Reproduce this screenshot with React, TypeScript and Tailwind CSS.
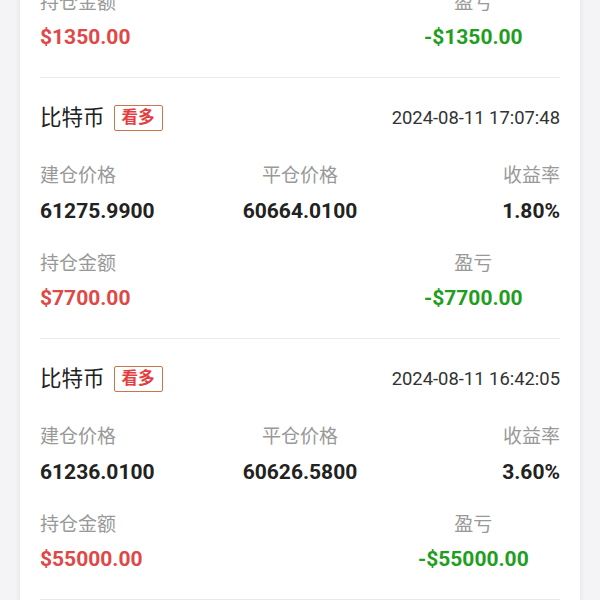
import React from "react";

type Rec = {
  time: string;
  open: string;
  close: string;
  rate: string;
  amount: string;
  pnl: string;
};

const records: Rec[] = [
  { time: "2024-08-11 17:30:12", open: "61300.0000", close: "60700.0000", rate: "1.80%", amount: "$1350.00", pnl: "-$1350.00" },
  { time: "2024-08-11 17:07:48", open: "61275.9900", close: "60664.0100", rate: "1.80%", amount: "$7700.00", pnl: "-$7700.00" },
  { time: "2024-08-11 16:42:05", open: "61236.0100", close: "60626.5800", rate: "3.60%", amount: "$55000.00", pnl: "-$55000.00" },
];

const font = { fontFamily: "Roboto, 'Noto Sans CJK SC', sans-serif" };

function Item({ r }: { r: Rec }) {
  return (
    <div className="border-t border-[#e9e9e9] h-[261px] flex flex-col">
      <div className="h-[80px] flex items-center justify-between">
        <div className="flex items-center gap-[9px]">
          <span className="text-[21.5px] text-[#222] leading-none">比特币</span>
          <span className="text-[16.5px] font-bold text-[#e33d3d] leading-none border-[1.5px] border-[#c8774c] rounded-[2px] px-[7px] py-[4px]">看多</span>
        </div>
        <span className="text-[18.4px] text-[#333] leading-none">{r.time}</span>
      </div>
      <div className="grid grid-cols-3 h-[34px] items-center text-[19px] text-[#999] leading-none">
        <span>建仓价格</span>
        <span className="text-center">平仓价格</span>
        <span className="text-right">收益率</span>
      </div>
      <div className="grid grid-cols-3 h-[38px] items-center text-[21px] font-bold text-[#222] leading-none">
        <span>{r.open}</span>
        <span className="text-center">{r.close}</span>
        <span className="text-right">{r.rate}</span>
      </div>
      <div className="h-[16px]" />
      <div className="grid grid-cols-3 h-[34px] items-center text-[19px] text-[#999] leading-none">
        <span>持仓金额</span>
        <span />
        <span className="text-center">盈亏</span>
      </div>
      <div className="grid grid-cols-3 h-[36px] items-center text-[21px] font-bold leading-none">
        <span className="text-[#e04848]">{r.amount}</span>
        <span />
        <span className="text-center text-[#1f9e1f]">{r.pnl}</span>
      </div>
    </div>
  );
}

export default function App() {
  return (
    <div className="w-[600px] h-[600px] overflow-hidden bg-[#f4f3f5]" style={font}>
      <div className="mx-[20px] -mt-[184px] bg-white shadow-[0_0_6px_rgba(0,0,0,0.08)] px-[20px]">
        {records.map((r, i) => (
          <Item key={i} r={r} />
        ))}
        <div className="border-t border-[#e9e9e9] h-[60px]" />
      </div>
    </div>
  );
}
